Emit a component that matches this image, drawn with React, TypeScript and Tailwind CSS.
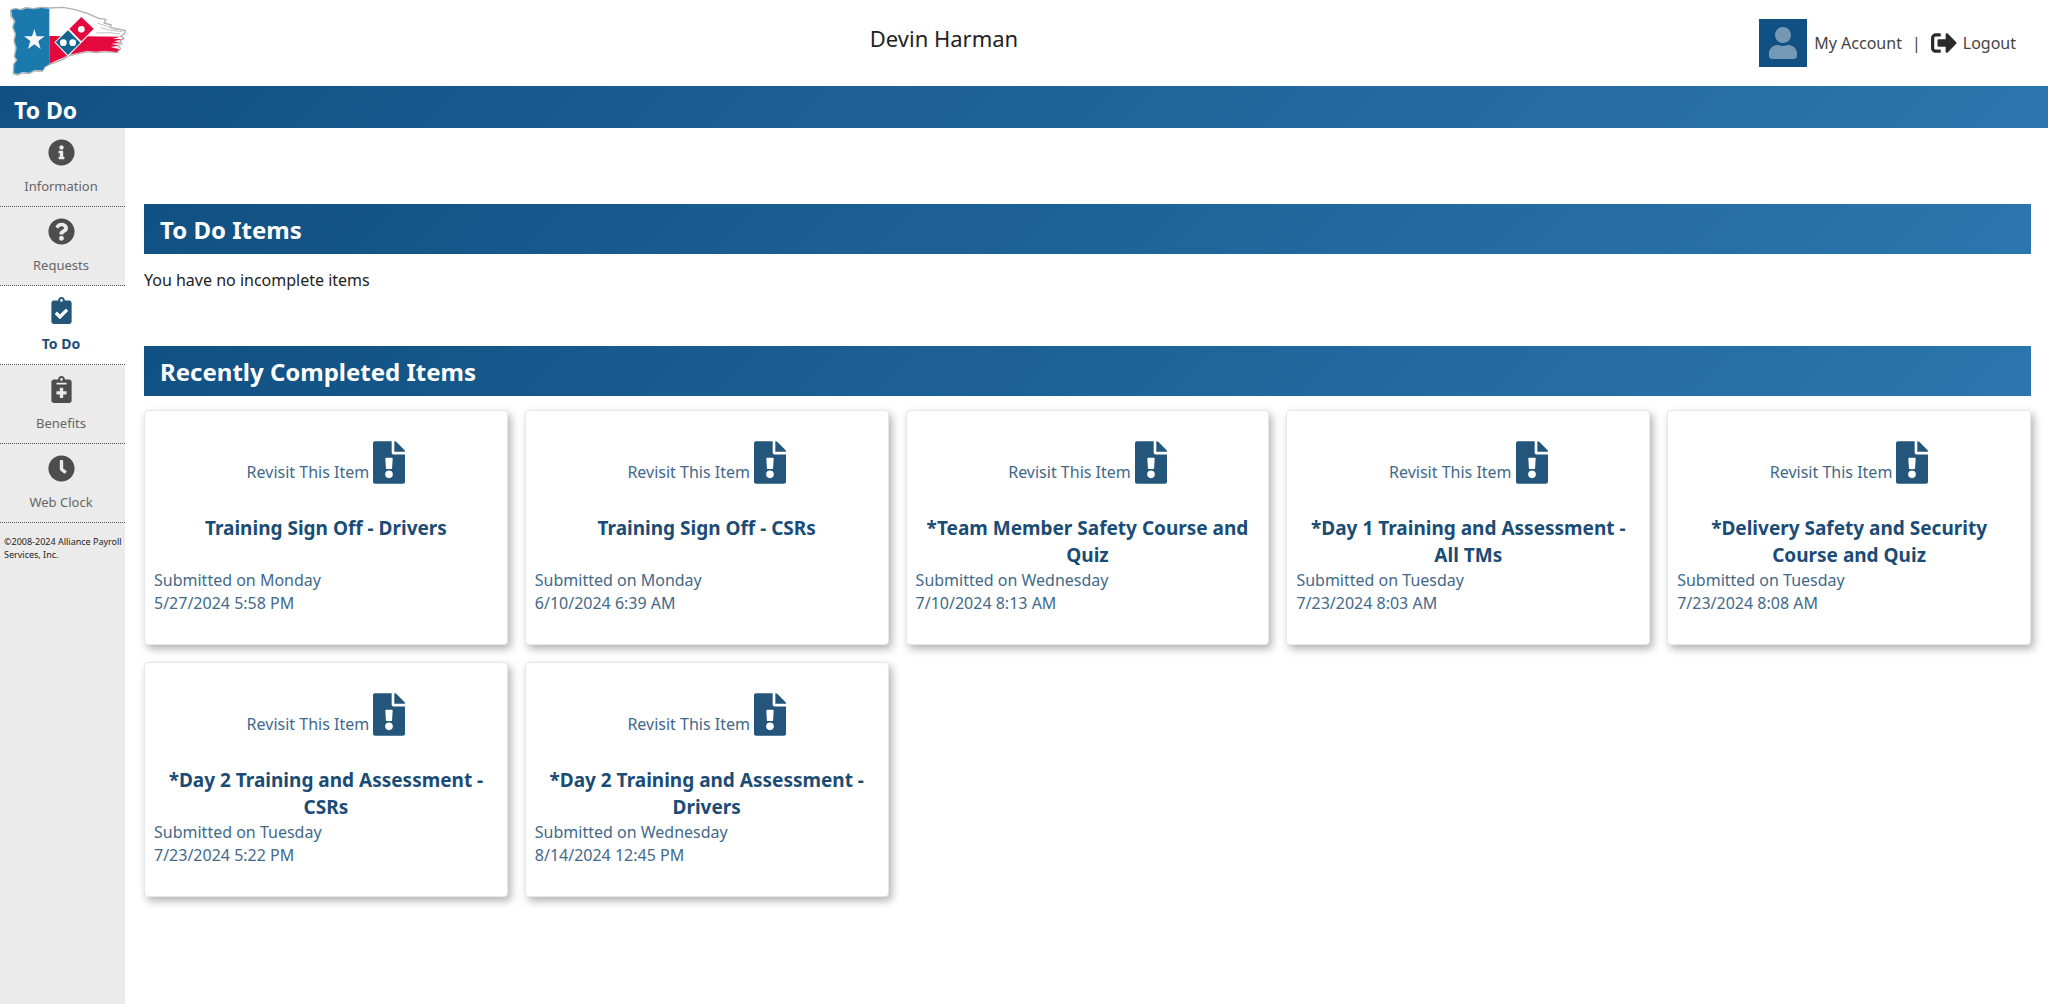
import React from "react";
import {
  FaInfoCircle,
  FaQuestionCircle,
  FaClipboardCheck,
  FaNotesMedical,
  FaClock,
  FaSignOutAlt,
  FaUser,
} from "react-icons/fa";
import type { IconType } from "react-icons";

type NavItem = { label: string; icon: IconType; active?: boolean };

const navItems: NavItem[] = [
  { label: "Information", icon: FaInfoCircle },
  { label: "Requests", icon: FaQuestionCircle },
  { label: "To Do", icon: FaClipboardCheck, active: true },
  { label: "Benefits", icon: FaNotesMedical },
  { label: "Web Clock", icon: FaClock },
];

type CompletedItem = { title: string; day: string; time: string };

const completedItems: CompletedItem[] = [
  { title: "Training Sign Off - Drivers", day: "Monday", time: "5/27/2024 5:58 PM" },
  { title: "Training Sign Off - CSRs", day: "Monday", time: "6/10/2024 6:39 AM" },
  { title: "*Team Member Safety Course and Quiz", day: "Wednesday", time: "7/10/2024 8:13 AM" },
  { title: "*Day 1 Training and Assessment - All TMs", day: "Tuesday", time: "7/23/2024 8:03 AM" },
  { title: "*Delivery Safety and Security Course and Quiz", day: "Tuesday", time: "7/23/2024 8:08 AM" },
  { title: "*Day 2 Training and Assessment - CSRs", day: "Tuesday", time: "7/23/2024 5:22 PM" },
  { title: "*Day 2 Training and Assessment - Drivers", day: "Wednesday", time: "8/14/2024 12:45 PM" },
];

function FlagLogo() {
  return (
    <svg viewBox="0 0 384 240" className="h-20 w-32" role="img" aria-label="Company flag logo">
      <path
        d="M32 28L44 22L60 26L78 20L100 23L122 19L148 21L190 19L226 26L262 37L296 52L318 55L312 66L334 72L330 79L352 84L376 88L374 98L362 106L372 112L360 120L366 128L352 134L362 142L352 155L318 152L290 155L262 152L236 158L208 164L188 176L166 184L148 190L134 198L128 210L104 210L88 217L68 216L54 222L40 218L41 190L50 178L43 166L48 140L42 120L46 98L38 78L43 60L33 46Z"
        fill="#ffffff"
        stroke="#b0b0b0"
        strokeWidth="4"
        strokeLinejoin="round"
      />
      <path
        d="M34 28L48 24L62 28L80 22L100 25L122 21L148 23V190L134 197L128 208L104 207L88 215L68 213L54 219L42 216L43 190L52 178L45 166L50 140L44 120L48 98L40 78L46 60L36 46Z"
        fill="#1a7aad"
      />
      <path
        d="M148 105L250 106L362 107L338 113L368 115L342 121L364 126L334 128L356 134L332 138L358 145L350 153L316 149L288 152L262 149L236 155L208 161L186 172L166 180L148 188Z"
        fill="#e4083c"
      />
      <path
        d="M292 66L332 80L348 86M300 80L332 88L368 92M288 96L330 95L360 99"
        stroke="#c4c4c4"
        strokeWidth="3"
        fill="none"
      />
      <path
        d="M103 84L110 106L134 106L115 120L122 144L103 130L84 144L91 120L72 106L96 106Z"
        fill="#f4f8fb"
      />
      <path d="M244 44L285 83L204 167L163 124Z" fill="#ffffff" />
      <path d="M244 48L281 83L244 121L208 84Z" fill="#e4083c" />
      <path d="M204 88L241 125L204 162L167 124Z" fill="#126591" />
      <circle cx="244" cy="85" r="10" fill="#ffffff" />
      <circle cx="190" cy="125" r="10" fill="#ffffff" />
      <circle cx="218" cy="125" r="10" fill="#ffffff" />
    </svg>
  );
}

function FileAlertIcon() {
  return (
    <svg viewBox="0 0 384 512" className="h-[43px] w-8 shrink-0" fill="currentColor" aria-hidden="true">
      <path
        fillRule="evenodd"
        d="M224 136V0H24C10.700 0 0 10.700 0 24v464c0 13.300 10.700 24 24 24h336c13.300 0 24-10.700 24-24V160H248c-13.200 0-24-10.800-24-24zM160 200h64c7 0 12 5 12 12l-7 112c0 6-5 11-12 11h-50c-7 0-12-5-12-11l-7-112c0-7 5-12 12-12zM192 352a46 46 0 1 1 0 92a46 46 0 1 1 0-92z"
      />
      <path d="M256 0h6c6 0 12 2 17 7l98 98c4 4 7 10 7 17v6H256z" />
    </svg>
  );
}

function SectionHeading({ children }: { children: React.ReactNode }) {
  return (
    <h2 className="bg-linear-[135deg,#115082,#2b76ae] px-4 pt-[9px] pb-[7px] text-2xl leading-[34px] font-bold text-white">
      {children}
    </h2>
  );
}

function ItemCard({ title, day, time }: CompletedItem) {
  return (
    <li className="flex min-h-[235px] flex-col rounded-sm border border-gray-200 bg-white px-[9px] pt-[30px] pb-6 text-[#42698a] shadow-[3px_4px_8px_rgba(0,0,0,0.3)]">
      <a href="#revisit" className="flex items-end justify-center gap-1">
        <span className="text-base leading-6">Revisit This Item</span>
        <span className="text-[#24557b]">
          <FileAlertIcon />
        </span>
      </a>
      <h3 className="mt-[31px] min-h-[54px] px-1 text-center text-[19px] leading-[27px] font-bold text-[#1a4c75]">
        {title}
      </h3>
      <p className="text-base leading-[23px]">
        Submitted on {day}
        <br />
        {time}
      </p>
    </li>
  );
}

export default function App() {
  return (
    <div className="flex min-h-screen flex-col bg-white font-['Noto_Sans',sans-serif] text-[#222222]">
      <header className="grid h-[86px] grid-cols-[1fr_auto_1fr] items-center">
        <div className="flex items-center pb-1">
          <FlagLogo />
        </div>
        <div className="pr-40 pb-[10px] text-[22px] leading-8">Devin Harman</div>
        <div className="flex items-center justify-end gap-[10px] pr-8 text-base text-[#444444]">
          <a href="#account" className="flex items-center gap-[7px]">
            <span className="flex size-12 items-center justify-center bg-[#115082] text-[#7599b5]">
              <FaUser className="h-8 w-7" />
            </span>
            My Account
          </a>
          <span>|</span>
          <a href="#logout" className="flex items-center gap-[6px]">
            <FaSignOutAlt className="size-[26px] text-[#2b2b2b]" />
            Logout
          </a>
        </div>
      </header>

      <div className="bg-linear-[135deg,#115082,#2b76ae] px-[14px] pt-[7px] pb-px">
        <h1 className="text-[23px] leading-[34px] font-bold text-white">To Do</h1>
      </div>

      <div className="flex flex-1">
        <aside className="w-[125px] shrink-0 bg-[#ebebeb]">
          <nav>
            <ul>
              {navItems.map(({ label, icon: Icon, active }) => (
                <li key={label}>
                  <a
                    href="#section"
                    aria-current={active ? "page" : undefined}
                    className={
                      active
                        ? "flex h-[79px] flex-col items-center border-b border-dotted border-[#555555] bg-white pt-[11px] pr-[3px] text-sm font-bold text-[#1d4f79]"
                        : "flex h-[79px] flex-col items-center border-b border-dotted border-[#555555] pt-[11px] pr-[3px] text-[13px] text-[#666666]"
                    }
                  >
                    <Icon className={active ? "size-[27px] text-[#24557b]" : "size-[27px] text-[#4d4d4d]"} />
                    <span className="mt-[10px] leading-5">{label}</span>
                  </a>
                </li>
              ))}
            </ul>
          </nav>
          <p className="mt-3 pl-1 text-[9px] leading-[13px] text-[#222222]">
            <span className="whitespace-nowrap">©2008-2024 Alliance Payroll</span> Services, Inc.
          </p>
        </aside>

        <main className="min-w-0 flex-1 pt-[76px] pr-[17px] pb-8 pl-[19px]">
          <section>
            <SectionHeading>To Do Items</SectionHeading>
            <p className="mt-[14px] mb-[54px] text-base leading-6">You have no incomplete items</p>
          </section>
          <section>
            <SectionHeading>Recently Completed Items</SectionHeading>
            <ul className="mt-[14px] grid grid-cols-5 gap-[17px]">
              {completedItems.map((item) => (
                <ItemCard key={item.title} {...item} />
              ))}
            </ul>
          </section>
        </main>
      </div>
    </div>
  );
}
